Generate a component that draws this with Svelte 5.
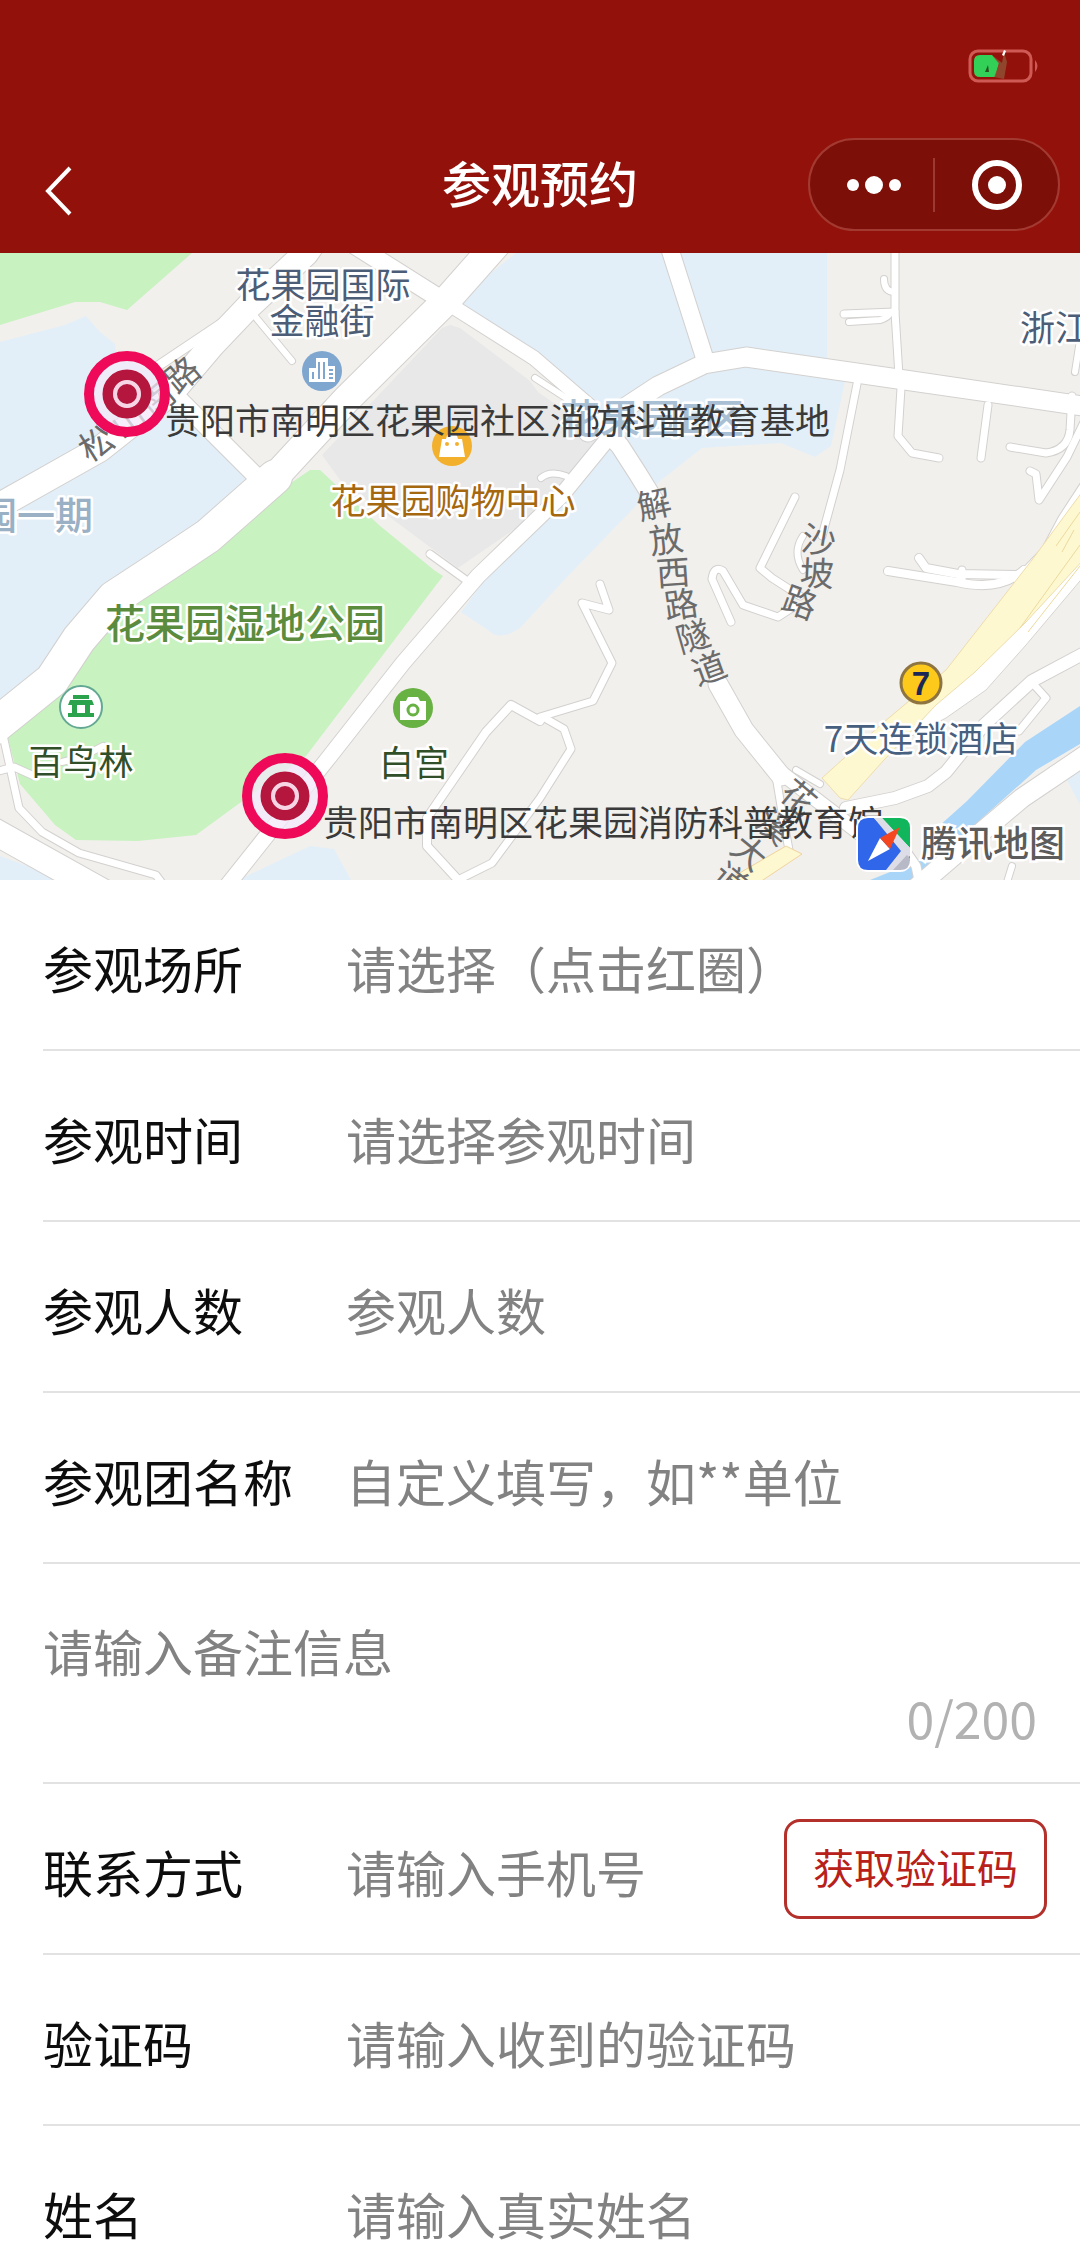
<script>
    const roads = [
        // main streets
        { d: "M-10 511 L100 449 L172 392 L212 345 L250 305 L306 253 L315 240", w: 25 },
        { d: "M158 366 L252 303", w: 9 },
        { d: "M500 240 L446 301 L346 400 L275 477", w: 28 },
        { d: "M275 477 L208 536 L166 564 L114 598 L79 639 L52 680 L-10 730", w: 34 },
        { d: "M350 242 L442 300", w: 18 },
        { d: "M452 306 L534 358 L592 408", w: 14 },
        { d: "M535 378 L566 398 L590 425", w: 6 },
        { d: "M180 400 L266 486", w: 17 },
        { d: "M253 314 L292 361", w: 6 },
        { d: "M610 436 L561 496 L478 576 L403 663 L330 756 L222 892", w: 15 },
        { d: "M430 554 L466 580", w: 7 },
        { d: "M541 478 Q550 470 566 476", w: 6 },
        { d: "M667 240 L704 356", w: 17 },
        { d: "M588 432 L658 386 L704 364 L746 357 L898 379 L1090 407", w: 19 },
        { d: "M600 424 L620 446 L638 474 L654 500", w: 18 },
        { d: "M718 684 L744 730 L781 776", w: 19 },
        { d: "M775 768 L866 838", w: 14 },

        // north east blocks
        { d: "M895 245 L895 312 L899 376", w: 7 },
        { d: "M844 314 L895 312", w: 7 },
        { d: "M849 322 L880 320 Q888 318 890 313", w: 6 },
        { d: "M884 279 Q884 292 895 292", w: 6 },
        { d: "M857 384 L840 470 L822 536", w: 7 },
        { d: "M901 388 L898 436 L912 453 L939 458", w: 7 },
        { d: "M988 405 L981 458", w: 7 },
        { d: "M1010 447 L1046 453 Q1068 450 1070 430 L1072 396", w: 7 },
        { d: "M1085 420 L1067 457 L1039 500 L1036 474 L1030 471", w: 7 },
        { d: "M1080 340 L1075 372", w: 6 },
        { d: "M803 536 Q792 552 803 570", w: 6 },
        { d: "M795 497 L760 568 L772 578 L800 596", w: 7 },
        { d: "M731 622 L712 579 Q714 565 723 571 L743 605 L778 617 L795 606", w: 7 },
        { d: "M919 558 L926 568 L958 574 L1016 575", w: 8 },
        { d: "M888 571 L957 582 Q1000 592 1024 570", w: 8 },
        { d: "M962 570 L962 582", w: 7 },
        { d: "M1090 480 L1064 520 L1047 552 L1020 580", w: 12 },

        // middle lanes
        { d: "M600 584 L609 610 L582 603 L612 663 L593 701 L540 717", w: 7 },
        { d: "M543 717 L564 729 L571 749 L540 798 L492 863 L458 880 L455 895", w: 7 },
        { d: "M540 721 L511 705 L486 732 L427 818 L427 846 L460 882", w: 8 },
        { d: "M776 776 L782 812 L789 850", w: 7 },
        { d: "M796 770 L820 784", w: 6 },

        // along the river
        { d: "M1090 650 L1032 681 L984 725 L946 772 L928 786 L895 798 L846 808", w: 12 },
        { d: "M1036 687 L1046 698 L1019 731", w: 7 },
        { d: "M1090 752 L1022 798 L965 846 L902 900", w: 19 },
        { d: "M1052 770 L1061 779", w: 6 },
        { d: "M898 840 L916 866 L922 895", w: 9 },
        { d: "M1012 866 L1004 892", w: 6 },

        // south west
        { d: "M-10 829 L110 896", w: 26 },
        { d: "M3 735 L19 808 L42 832 L79 853 L156 875 L170 894", w: 7 },
        { d: "M-5 772 L14 767 L34 776", w: 7 },
        { d: "M103 746 L82 757 L62 762", w: 6 },
    ];

    const labels = [
        { text: "花果园国际", x: 323, y: 298, size: 35, color: "#4b5d77" },
        { text: "金融街", x: 322, y: 334, size: 35, color: "#4b5d77" },
        { text: "浙江", x: 1055, y: 341, size: 35, color: "#4b5d77" },
        { text: "园一期", x: 36, y: 529, size: 38, color: "#9ab0c4", bold: true },
        { text: "花果园E区", x: 652, y: 433, size: 40, color: "#a9bfd4", bold: true },
        { text: "花果园购物中心", x: 453, y: 514, size: 35, color: "#a5680f" },
        { text: "花果园湿地公园", x: 245, y: 638, size: 40, color: "#5b8c3e", bold: true },
        { text: "百鸟林", x: 81, y: 775, size: 35, color: "#31502a" },
        { text: "白宫", x: 414, y: 776, size: 35, color: "#31502a" },
        { text: "7天连锁酒店", x: 921, y: 752, size: 35, color: "#48607f" },
    ];

    const streetNames = [
        { char: "松", x: 96, y: 443, turn: -32 },
        { char: "山", x: 128, y: 420, turn: -36 },
        { char: "南", x: 157, y: 398, turn: -40 },
        { char: "路", x: 182, y: 374, turn: -40 },
        { char: "解", x: 654, y: 504, turn: -12 },
        { char: "放", x: 666, y: 539, turn: -8 },
        { char: "西", x: 673, y: 572, turn: -4 },
        { char: "路", x: 681, y: 604, turn: -8 },
        { char: "隧", x: 693, y: 636, turn: -16 },
        { char: "道", x: 709, y: 668, turn: -20 },
        { char: "沙", x: 819, y: 540, turn: 10 },
        { char: "坡", x: 817, y: 573, turn: 3 },
        { char: "路", x: 800, y: 602, turn: 20 },
        { char: "花", x: 799, y: 797, turn: 40 },
        { char: "溪", x: 775, y: 826, turn: 40 },
        { char: "大", x: 750, y: 852, turn: 40 },
        { char: "道", x: 731, y: 880, turn: 40 },
    ];

    const places = [
        { name: "贵阳市南明区花果园社区消防科普教育基地", x: 127, y: 394 },
        { name: "贵阳市南明区花果园消防科普教育馆", x: 285, y: 796 },
    ];

    const visitFields = [
        { id: "place", label: "参观场所", placeholder: "请选择（点击红圈）", readonly: true },
        { id: "time", label: "参观时间", placeholder: "请选择参观时间", readonly: true },
        { id: "count", label: "参观人数", placeholder: "参观人数" },
        { id: "group", label: "参观团名称", placeholder: "自定义填写，如**单位" },
    ];

    const contactFields = [
        { id: "phone", label: "联系方式", placeholder: "请输入手机号", type: "tel", action: "获取验证码" },
        { id: "code", label: "验证码", placeholder: "请输入收到的验证码" },
        { id: "name", label: "姓名", placeholder: "请输入真实姓名" },
    ];

    const remarkLimit = 200;
    let remark = $state("");
    let form = $state({});
</script>

{#snippet field(item)}
    <div class="row">
        <label for={item.id}>{item.label}</label>
        <input
            id={item.id}
            type={item.type ?? "text"}
            placeholder={item.placeholder}
            readonly={item.readonly}
            bind:value={form[item.id]}
        />
        {#if item.action}
            <button type="button" class="code-button">{item.action}</button>
        {/if}
    </div>
{/snippet}

<div class="page">
    <header>
        <div class="status">
            <svg width="74" height="36" viewBox="0 0 74 36" aria-hidden="true">
                <rect x="2" y="3" width="61" height="30" rx="8" fill="none" stroke="#cf5a55" stroke-width="3" />
                <path d="M12 7 H24 L31 15 L27 29 H12 Q6 29 6 23 V13 Q6 7 12 7 Z" fill="#33d058" />
                <path d="M24 7 L34 15 L36 4 L39 14 L36 31 L26 29 L31 16 Z" fill="#8e5c3a" opacity="0.7" />
                <path d="M34 7 L36 2 L38 3 L36 8 Z" fill="#fff" />
                <path d="M17 24 L20 17 L21 24 Z" fill="#28521f" />
                <path d="M67 12 Q72 18 67 24 Z" fill="#cf5a55" />
            </svg>
        </div>
        <div class="nav">
            <button class="back" aria-label="返回">
                <svg width="30" height="52" viewBox="0 0 30 52">
                    <path d="M26 3 L4 26 L26 49" fill="none" stroke="#fff" stroke-width="4" />
                </svg>
            </button>
            <h1>参观预约</h1>
            <div class="capsule">
                <button aria-label="更多">
                    <svg width="60" height="52" viewBox="0 0 60 52" fill="#fff">
                        <circle cx="11" cy="26" r="6" />
                        <circle cx="32" cy="26" r="9" />
                        <circle cx="53" cy="26" r="6" />
                    </svg>
                </button>
                <span class="divider"></span>
                <button aria-label="关闭">
                    <svg width="52" height="52" viewBox="0 0 52 52">
                        <circle cx="26" cy="26" r="22" fill="none" stroke="#fff" stroke-width="6" />
                        <circle cx="26" cy="26" r="9" fill="#fff" />
                    </svg>
                </button>
            </div>
        </div>
    </header>

    <svg class="map" viewBox="0 253 1080 627" role="img" aria-label="地图">
        <rect y="253" width="1080" height="627" fill="#f2f0ed" />

        <!-- areas -->
        <path fill="#e2eff8" d="M0 342 L65 325 L86 316 L100 332 L115 344 L116 356 L170 380 L260 485 L190 560 L110 600 L45 680 L0 710 Z" />
        <path fill="#e2eff8" d="M516 253 H827 V360 L846 377 L831 446 L815 457 L781 443 L702 448 L660 481 L567 577 L520 628 Q500 642 488 630 L461 612 L540 505 L600 440 L540 367 L450 306 Z" />
        <path fill="#e2eff8" d="M0 856 L60 878 V880 H0 Z M238 880 L310 846 L334 849 L351 880 Z M1066 778 L1080 768 V805 Z" />
        <path fill="#c8f2c0" d="M0 253 H192 L127 310 L100 302 H75 L0 325 Z" />
        <path fill="#c8f2c0" d="M310 470 H320 L379 525 L434 570 L443 576 L306 756 L237 805 L196 835 L138 841 L76 840 L55 825 L20 784 L7 735 L60 680 L100 600 L200 545 Z" />
        <path fill="#e8e8e9" d="M442 328 L450 325 L460 328 L530 381 L538 392 L592 430 L600 446 L545 508 L458 568 L340 480 L322 455 Z" />
        <path fill="#a9d5f9" d="M1080 706 L1025 742 L967 801 L929 835 L920 860 L870 880 H924 L970 829 L1036 770 L1080 744 Z" />

        <g fill="none" stroke-linecap="round" stroke-linejoin="round">
            {#each roads as road}
                <path d={road.d} stroke="#d3d1cf" stroke-width={road.w + 2} />
            {/each}
            {#each roads as road}
                <path d={road.d} stroke="#fff" stroke-width={road.w} />
            {/each}
        </g>

        <!-- expressway -->
        <path fill="#fff" stroke="#d6d4d0" d="M1085 575 L1026 645 L986 690 L946 718 L900 742 L935 690 L1020 600 L1085 500 Z" />
        <path fill="#fdf8cf" stroke="#eedcae" d="M1085 488 L1032 560 L946 670 L884 722 L822 778 L840 798 L848 800 L884 760 L936 705 L975 672 L1026 622 L1085 558 Z" />
        <path fill="none" stroke="#ecd9a0" d="M1080 512 L1056 546 M1080 545 L1020 628 M1074 530 L1062 552 M1080 566 L1028 632" />
        <path fill="#fdf8cf" stroke="#efd39c" d="M786 846 L802 854 L760 882 H724 Z" />

        <g text-anchor="middle" paint-order="stroke" stroke="#fff" stroke-width="5" stroke-linejoin="round">
            {#each labels as item}
                <text x={item.x} y={item.y} font-size={item.size} fill={item.color} class:bold={item.bold}>{item.text}</text>
            {/each}
        </g>

        <g class="street" text-anchor="middle" font-size="34">
            {#each streetNames as item}
                <text transform="translate({item.x} {item.y}) rotate({item.turn})" y="13">{item.char}</text>
            {/each}
        </g>

        <!-- business district -->
        <g transform="translate(322 371)">
            <circle r="20" fill="#7ea6cf" />
            <path fill="#fff" d="M-13 11 V-3 H-6 V-13 H6 V-5 H13 V11 Z" />
            <path stroke="#7ea6cf" stroke-width="2" d="M-9 1 V8 M-3 -9 V8 M2 -9 V8 M7 -1 H11 M7 3 H11 M7 7 H11" />
        </g>
        <!-- shopping -->
        <g transform="translate(452 446)">
            <circle r="20" fill="#f2b02c" />
            <path fill="#fff" d="M-10 -7 H-6 Q-5 -13 0 -13 Q5 -13 6 -7 H10 L13 11 H-13 Z" />
            <circle cx="-5" cy="-2" r="2" fill="#f2b02c" />
            <circle cx="5" cy="-2" r="2" fill="#f2b02c" />
        </g>
        <!-- pavilion -->
        <g transform="translate(81 707)">
            <circle r="21" fill="#fff" stroke="#63a893" stroke-width="2" />
            <path fill="#2ba24c" d="M-8 -12 H8 V-8 H-8 Z M-11 -7 H11 L13 -2 H-13 Z M-9 -2 H-4 V6 H4 V-2 H9 V6 H13 V10 H-13 V6 H-9 Z" />
        </g>
        <!-- scenic spot -->
        <g transform="translate(413 708)">
            <circle r="20" fill="#68b143" />
            <path fill="#fff" d="M-13 -7 H-7 L-5 -11 H5 L7 -7 H13 V12 H-13 Z" />
            <circle cy="2" r="5" fill="none" stroke="#68b143" stroke-width="3" />
        </g>
        <!-- hotel -->
        <g transform="translate(921 683)">
            <circle r="20" fill="#fdc91a" stroke="#8d7440" stroke-width="3" />
            <text class="seven" text-anchor="middle" y="12" font-size="33">7</text>
        </g>

        {#each places as place}
            <g class="place" transform="translate({place.x} {place.y})">
                <circle r="36" fill="#f3eafa" fill-opacity="0.75" />
                <circle r="38" fill="none" stroke="#ee0a58" stroke-width="10" />
                <circle r="19" fill="none" stroke="#b4163e" stroke-width="11" />
                <circle r="12" fill="none" stroke="#f7d5e4" stroke-width="4" />
                <circle r="10" fill="#b4163e" />
                <text x="38" y="40" font-size="35">{place.name}</text>
            </g>
        {/each}

        <!-- map provider -->
        <g transform="translate(858 818)">
            <rect x="-2" y="-2" width="56" height="56" rx="12" fill="#fff" />
            <path fill="#2f66ea" d="M10 0 H16 L52 36 V42 L42 52 H10 Q0 52 0 42 V10 Q0 0 10 0 Z" />
            <path fill="#11b55b" d="M24 0 H42 Q52 0 52 10 V30 Z" />
            <path fill="#dcdde6" d="M16 0 H24 L52 30 V38 L38 52 H28 L43 33 Z" />
            <path fill="#b7b9c6" d="M35 52 L49 37 L52 40 V42 Q52 52 42 52 Z" />
            <path fill="#fff" d="M10 43 L22 20 L32 31 Z" />
            <path fill="#f4471f" d="M22 20 L42 9 L32 31 Z" />
        </g>
        <text class="provider" x="921" y="857" font-size="36">腾讯地图</text>
    </svg>

    <form>
        {#each visitFields as item}
            {@render field(item)}
        {/each}
        <div class="remark">
            <textarea
                aria-label="备注信息"
                rows="1"
                placeholder="请输入备注信息"
                maxlength={remarkLimit}
                bind:value={remark}
            ></textarea>
            <span class="counter">{remark.length}/{remarkLimit}</span>
        </div>
        {#each contactFields as item}
            {@render field(item)}
        {/each}
    </form>
</div>

<style>
    :global(body) {
        margin: 0;
        background: #fff;
    }

    .page {
        font-family: "Noto Sans CJK SC", "Noto Sans", sans-serif;
        color: #0d0d0d;
    }

    button {
        padding: 0;
        border: none;
        background: none;
        font-family: inherit;
        cursor: pointer;
    }

    svg {
        display: block;
    }

    header {
        background: #92120b;
        padding-bottom: 22px;
    }

    .status {
        display: flex;
        justify-content: flex-end;
        padding: 48px 38px 54px;
    }

    .nav {
        display: grid;
        grid-template-columns: 1fr auto 1fr;
        align-items: center;
        padding: 0 20px;
    }

    .back {
        justify-self: start;
        padding: 12px 24px 0;
    }

    h1 {
        margin: 0;
        padding-bottom: 6px;
        font-size: 49px;
        line-height: 72px;
        font-weight: 500;
        color: #fff;
    }

    .capsule {
        justify-self: end;
        display: flex;
        align-items: center;
        box-sizing: border-box;
        width: 252px;
        height: 93px;
        border: 2px solid #a33a32;
        border-radius: 48px;
        background: #7c0f08;
    }

    .capsule button {
        flex: 1;
        display: flex;
        justify-content: center;
    }

    .divider {
        width: 2px;
        height: 54px;
        background: #9a3a33;
    }

    .map {
        width: 100%;
        height: auto;
    }

    .map .bold,
    .provider {
        font-weight: 500;
    }

    .street {
        fill: #6b6b6b;
    }

    .place {
        fill: #3a3a3a;
        cursor: pointer;
    }

    .seven {
        font-family: "Liberation Sans", sans-serif;
        font-weight: bold;
        fill: #1b2857;
    }

    .provider {
        fill: #5c5c5c;
        stroke: #fff;
        stroke-width: 5px;
        paint-order: stroke;
    }

    form {
        padding-left: 43px;
    }

    .row {
        display: flex;
        align-items: center;
        box-sizing: border-box;
        min-height: 171px;
        padding-right: 33px;
        border-bottom: 2px solid #e2e2e2;
    }

    label {
        flex: 0 0 303px;
        font-size: 50px;
        line-height: 72px;
        padding-top: 4px;
    }

    input,
    textarea {
        flex: 1;
        min-width: 0;
        box-sizing: border-box;
        padding: 4px 0 0;
        border: none;
        outline: none;
        background: none;
        font-family: inherit;
        font-size: 50px;
        line-height: 72px;
        height: 76px;
        color: inherit;
    }

    input::placeholder,
    textarea::placeholder {
        color: #828282;
        opacity: 1;
    }

    .code-button {
        box-sizing: border-box;
        width: 263px;
        height: 100px;
        padding-bottom: 6px;
        border: 3px solid #b3302b;
        border-radius: 16px;
        font-size: 41px;
        color: #b8201a;
    }

    .remark {
        display: flex;
        flex-direction: column;
        box-sizing: border-box;
        min-height: 220px;
        padding: 46px 43px 24px 0;
        border-bottom: 2px solid #e2e2e2;
    }

    textarea {
        flex: none;
        width: 100%;
        resize: none;
        overflow: hidden;
    }

    .counter {
        align-self: flex-end;
        font-size: 50px;
        line-height: 62px;
        color: #b2b2b2;
    }
</style>
